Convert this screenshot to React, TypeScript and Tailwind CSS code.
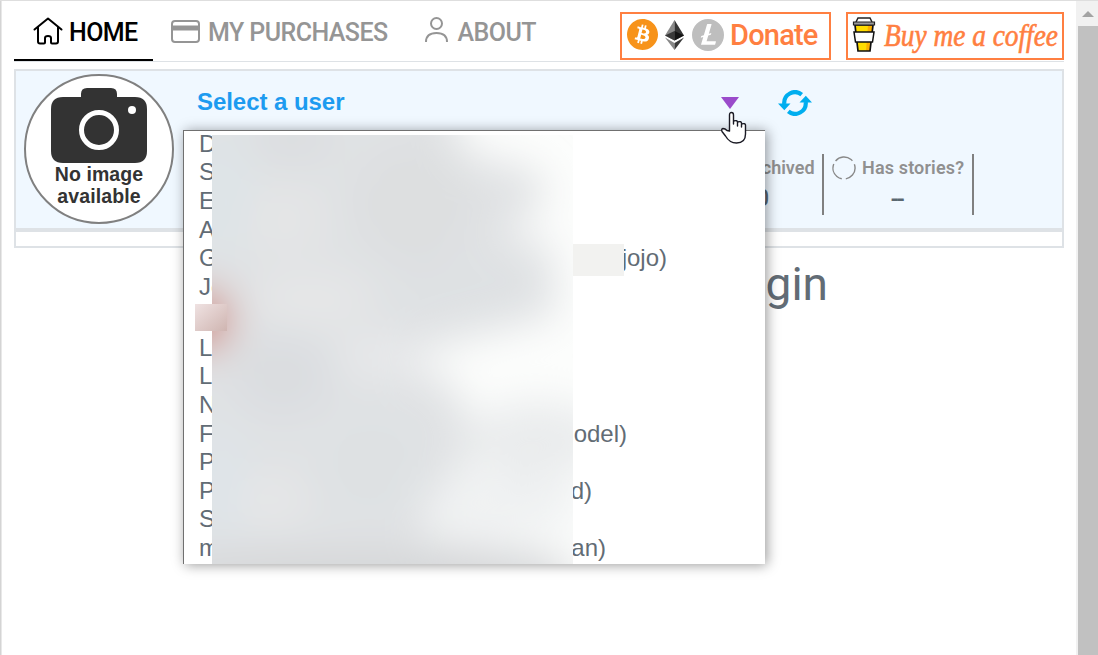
import { SiBitcoin, SiLitecoin } from "react-icons/si";

const users = [
  ["D", ""], ["S", ""], ["E", ""], ["A", ""], ["G", "jojo)"], ["Jo", ""], ["_", ""],
  ["L", ""], ["L", ""], ["N", ""], ["F", "model)"], ["P", ""], ["P", "d)"], ["S", ""], ["m", "an)"],
];

const blobs: [number, number, number, number, string][] = [
  [80, 5, 40, 20, "#dadddf"], [200, 70, 60, 60, "#dddfe0"], [70, 85, 45, 35, "#e4e5e6"],
  [10, 60, 25, 60, "#dde4e8"], [70, 240, 50, 40, "#dadde0"], [100, 165, 60, 25, "#e6e7e8"],
  [250, 150, 70, 25, "#dee1e3"], [160, 330, 50, 50, "#dee1e3"], [60, 365, 35, 25, "#e6e7e8"],
  [8, 345, 22, 60, "#dee4e9"], [150, 440, 220, 20, "#d3d4d6"],
];

function HomeIcon() {
  return (
    <svg width="30" height="28" viewBox="0 0 30 28" fill="none" stroke="#000" strokeWidth="2" strokeLinejoin="round" strokeLinecap="round" className="mt-[1px]">
      <path d="M1.500 12.500 15 1.500l13.500 11M5 10v14.500Q5 26.500 7 26.500h4q1 0 1-1v-4.500q0-2 3-2t3 2v4.500q0 1 1 1h4q2 0 2-2V10" />
    </svg>
  );
}

function Refresh() {
  return (
    <svg width="34" height="26" viewBox="0 0 34 26" className="shrink-0">
      <path d="M6.300 14A10.700 10.700 0 0 1 23.700 4.600M27.700 12A10.700 10.700 0 0 1 10.300 21.400" fill="none" stroke="#00aeef" strokeWidth="4.200" />
      <path d="M0 13.500h12.500l-6.200 6.700zM21.500 12.500h12.500l-6.200-6.700z" fill="#00aeef" />
    </svg>
  );
}

function Cup() {
  return (
    <svg width="24" height="36" viewBox="0 0 24 36" className="shrink-0">
      <path d="M3 8h18l-3 26H6z" fill="#ffdd00" />
      <path d="M16 8h5l-3 26h-4z" fill="#fbb000" />
      <path d="M3 8h18l-3 26H6z" fill="none" stroke="#111" strokeWidth="1.700" />
      <path d="M2 15h20l-1.500 10h-17z" fill="#fff" stroke="#111" strokeWidth="1.500" />
      <path d="M4 5l2-4h12l2 4" fill="#fff" stroke="#222" strokeWidth="1.500" />
      <path d="M1.500 5h21v3h-21z" fill="#999" stroke="#222" strokeWidth="1.200" />
    </svg>
  );
}

function NoImage() {
  return (
    <div className="flex h-[150px] w-[150px] shrink-0 flex-col items-center rounded-full border-2 border-[#808080] bg-white pt-[12px]">
      <svg width="96" height="75" viewBox="0 0 96 75" className="shrink-0">
        <path d="M12 9h18V6q0-6 6-6h24q6 0 6 6v3h18q12 0 12 12v42q0 12-12 12H12Q0 75 0 63V21Q0 9 12 9z" fill="#333" />
        <circle cx="48" cy="42" r="17.500" fill="none" stroke="#fff" strokeWidth="5" />
        <circle cx="81" cy="22" r="4" fill="#fff" />
      </svg>
      <div className="mt-[1px] text-center text-[19.500px] leading-[21.500px] font-bold tracking-[0.100px] text-[#333]">No image<br />available</div>
    </div>
  );
}

function UserList() {
  return (
    <div className="absolute top-[129px] left-[183px] h-[434px] w-[582px] border-t border-l border-[#707070] bg-white shadow-[2px_1px_12px_rgba(0,0,0,0.4)]">
      <div className="h-full overflow-hidden pl-[15px] text-[24px] text-[#626c75]">
        <div className="-mt-[1.500px]">
          {users.map(([start, end], i) => (
            <div key={i} className={i === 6 ? "flex h-[32.500px] w-[468px] items-center justify-between" : "flex h-[28.600px] w-[468px] items-center justify-between"}>
              <span className={start === "_" ? "ml-[5px] text-black" : ""}>{start}</span>
              <span className={end === "model)" ? "mr-10" : end === "d)" ? "mr-[75px]" : end === "an)" ? "mr-[61px]" : ""}>{end}</span>
            </div>
          ))}
        </div>
      </div>
      <svg className="absolute top-[4px] left-[28px]" width="361" height="429" viewBox="0 0 361 429">
        <defs>
          <filter id="soft" filterUnits="userSpaceOnUse" x="-150" y="-150" width="700" height="750"><feGaussianBlur stdDeviation="20" /></filter>
        </defs>
        <rect width="361" height="429" fill="#fcfdfc" />
        <g filter="url(#soft)">
          <path d="M-80-60H230L255 20 325 35 335 65 290 100 340 110 345 180 230 210 180 230 240 245 265 310 225 365 215 400 350 420V520H-80Z" fill="#e0e2e4" />
          <ellipse cx="325" cy="305" rx="70" ry="40" fill="#eaeced" />
          <ellipse cx="290" cy="370" rx="80" ry="30" fill="#eff1f2" />
          <ellipse cx="170" cy="222" rx="45" ry="14" fill="#ebecee" />
          {blobs.map(([x, y, rx, ry, c], i) => (
            <ellipse key={i} cx={x} cy={y} rx={rx} ry={ry} fill={c} />
          ))}
          <ellipse cx="-10" cy="185" rx="28" ry="30" fill="#cf8276" />
        </g>
      </svg>
      <div className="absolute top-[173px] left-[11px] h-[27px] w-8 bg-linear-to-br from-[#efe2e2] to-[#cfb5b1]" />
      <div className="absolute top-[113px] left-[389px] h-8 w-[51px] bg-[#f2f2f0]" />
    </div>
  );
}

export default function App() {
  return (
    <div className="relative flex h-[655px] w-[1098px] overflow-hidden border-t border-[#dedede] bg-white font-['Liberation_Sans',sans-serif]">
      <div className="w-[2px] shrink-0 border-r border-[#e8e8e8] bg-[#d4d4d4]" />
      <div className="flex w-[1062px] shrink-0 flex-col pl-3">
        <header className="flex h-[61px] items-start border-b border-[#dee2e6] font-['Roboto',sans-serif] text-[25px] font-medium text-[#959595]">
          <div className="flex h-[60px] w-[139px] items-center border-b-2 border-black pl-[19px] text-black">
            <HomeIcon />
            <span className="mt-[5px] ml-[6px] tracking-[-0.600px]">HOME</span>
          </div>
          <div className="flex h-[60px] items-center pl-[18px]">
            <svg width="29" height="23" viewBox="0 0 29 23" fill="none" stroke="#959595" strokeWidth="2">
              <rect x="1" y="1" width="27" height="21" rx="3" /><path d="M1 8h27" strokeWidth="5" />
            </svg>
            <span className="mt-[3px] ml-2 tracking-[-0.560px]">MY PURCHASES</span>
          </div>
          <div className="flex h-[60px] items-center pl-[37px]">
            <svg width="23" height="26" viewBox="0 0 23 26" fill="none" stroke="#959595" strokeWidth="2" className="-mt-[2px]">
              <circle cx="11.500" cy="6.500" r="5.500" /><path d="M1 25q0-9 10.500-9T22 25" />
            </svg>
            <span className="mt-[3px] ml-[10px] tracking-[-0.600px]">ABOUT</span>
          </div>
          <div className="mt-[11px] ml-auto flex h-12 w-[211px] items-center border-2 border-[#ff7f41] pl-[5px] text-[29px] text-[#ff7f41]">
            <SiBitcoin className="-mt-[3px] h-[31px] w-[31px] shrink-0 text-[#f7931a]" />
            <svg width="19" height="30" viewBox="0 0 19 30" className="-mt-[3px] ml-[7px] shrink-0">
              <path d="M9.500 0v20.500L0 15.500z" fill="#8a8a8a" /><path d="M9.500 0v20.500l9.500-5z" fill="#343434" />
              <path d="M0 15.500 9.500 11v9.500z" fill="#393939" /><path d="M9.500 11l9.500 4.500-9.500 5z" fill="#141414" />
              <path d="M0 17.500l9.500 5.500v7z" fill="#888" /><path d="M19 17.500L9.500 23v7z" fill="#393939" />
            </svg>
            <SiLitecoin className="-mt-[3px] ml-[8px] h-8 w-8 shrink-0 text-[#bebebe]" />
            <span className="ml-[6px] tracking-[-0.800px]">Donate</span>
          </div>
          <div className="mt-[11px] ml-[15px] flex h-12 w-[218px] items-center border-2 border-[#ff7f41] pl-1">
            <div className="-mt-[2px]"><Cup /></div>
            <svg width="178" height="44" viewBox="0 0 178 44" className="ml-[7px] shrink-0 overflow-visible">
              <text x="1" y="32" textLength="174" lengthAdjust="spacingAndGlyphs" strokeWidth="0.600" className="fill-[#ff7f41] stroke-[#ff7f41] font-['Liberation_Serif',serif] text-[31px] font-medium italic">Buy me a coffee</text>
            </svg>
          </div>
        </header>
        <main className="mt-[7px] h-[179px] border-2 border-[#dee2e6]">
          <section className="flex h-[161px] border-b-4 border-[#dee2e6] bg-[#f0f8ff] pt-[3px] pl-2">
            <NoImage />
            <div className="ml-[23px] flex grow flex-col">
              <div className="mt-[14px] flex h-[29px] items-center">
                <span className="-mt-[2px] w-[524px] text-[24px] font-bold tracking-[-0.050px] text-[#1d9bf0]">Select a user</span>
                <svg width="18" height="12" viewBox="0 0 18 12"><path d="M0 0h18L9 12z" fill="#9a4bcb" /></svg>
                <div className="ml-[39px]"><Refresh /></div>
              </div>
              <div className="mt-[37px] flex h-[61px] font-['Roboto',sans-serif] text-[18px] font-semibold text-[#909090]">
                <div className="flex w-[627px] justify-end border-r-2 border-[#808080] pr-[7px]">
                  <div className="w-[72px] text-center"><div className="leading-7">Archived</div><div className="pl-[13px] text-left text-[23px] leading-[34px] font-medium text-[#5b6770]">0</div></div>
                </div>
                <div className="w-[150px] border-r-2 border-[#808080] pl-2">
                  <div className="flex h-7 items-center">
                    <svg width="24" height="24" viewBox="0 0 24 24" fill="none" stroke="#888" strokeWidth="1.400">
                      <circle cx="12" cy="12" r="11" strokeDasharray="19.040 4" transform="rotate(-140 12 12)" />
                    </svg>
                    <span className="-mt-[1px] ml-[6px] tracking-[0.150px] whitespace-nowrap">Has stories?</span>
                  </div>
                  <div className="pt-[1px] pr-[11px] text-center text-[23px] leading-[34px] tracking-[-2.500px] text-[#5b6770]">--</div>
                </div>
              </div>
            </div>
          </section>
        </main>
        <h1 className="mt-2 pr-[236px] text-right font-['Roboto',sans-serif] text-[46px] leading-[56px] text-[#626c75]">Login</h1>
      </div>
      <aside className="ml-auto flex w-[22px] flex-col border-l-2 border-[#f1f1f1] bg-[#c1c1c1]">
        <div className="flex h-[25px] items-center justify-center bg-[#f1f1f1]">
          <svg width="12" height="6" viewBox="0 0 12 6"><path d="M0 6 6 0l6 6z" fill="#a3a3a3" /></svg>
        </div>
      </aside>
      <UserList />
      <svg className="absolute top-[110px] left-[720px]" width="28" height="34" viewBox="0 0 28 34">
        <path d="M9.500 20V4q0-2.500 2-2.500t2 2.500v9V10q4-1 4 1v4-4q4-1 4 1v4-3q4-1 4 1v9q0 9-9 9-7 0-11-7L2 20.500q-1-2.500 1-3 2 0 4 2z" fill="#fff" stroke="#1a1a24" strokeWidth="1.400" strokeLinejoin="round" />
      </svg>
    </div>
  );
}
